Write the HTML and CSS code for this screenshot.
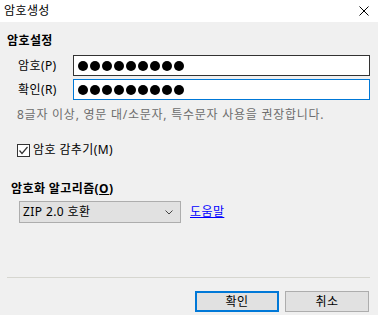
FILE: index.html
```html
<!DOCTYPE html>
<html>
    <head lang="ko">
        <meta charset="UTF-8">
        <title>암호생성</title>
        <link rel="stylesheet" href="styles.css">
    </head>
    <body>
        <div id="dialog">
            <div class="titlebar">
                <span class="title">암호생성</span>
                <svg class="close" width="10" height="10" viewBox="0 0 10 10">
                    <path d="M0.5 0.5L9.5 9.5M9.5 0.5L0.5 9.5" stroke="#000" stroke-width="1" fill="none"/>
                </svg>
            </div>
            <div class="body">
                <div class="group-title">암호설정</div>
                <div class="field">
                    <span class="label">암호(P)</span>
                    <div class="pw">
                        <i></i><i></i><i></i><i></i><i></i><i></i><i></i><i></i><i></i>
                    </div>
                </div>
                <div class="field second">
                    <span class="label">확인(R)</span>
                    <div class="pw focus">
                        <i></i><i></i><i></i><i></i><i></i><i></i><i></i><i></i><i></i>
                    </div>
                </div>
                <p class="hint">8글자 이상, 영문 대/소문자, 특수문자 사용을 권장합니다.</p>
                <div class="check">
                    <span class="box">
                        <svg width="11" height="11" viewBox="0 0 11 11">
                            <path d="M1.5 5.5L4 8.5L9.5 2" stroke="#333" stroke-width="1.2" fill="none"/>
                        </svg>
                    </span>
                    <span>암호 감추기(M)</span>
                </div>
                <div class="group-title algo">암호화 알고리즘(<u>O</u>)</div>
                <div class="algo-row">
                    <div class="select">
                        <span>ZIP 2.0 호환</span>
                        <svg width="8" height="5" viewBox="0 0 8 5">
                            <path d="M0.5 0.5L4 4L7.5 0.5" stroke="#444" stroke-width="1" fill="none"/>
                        </svg>
                    </div>
                    <a class="help" href="#">도움말</a>
                </div>
                <div class="sep"></div>
                <div class="buttons">
                    <span class="btn default">확인</span>
                    <span class="btn">취소</span>
                </div>
            </div>
        </div>
    </body>
</html>
```

FILE: styles.css
```css
*{
    margin:0;
    padding:0;
    box-sizing:border-box;
}
body{
    font-family:"Noto Sans","Noto Sans CJK KR",sans-serif;
    font-size:12px;
    line-height:16px;
    letter-spacing:0.4px;
    color:#000;
    background:#f0f0f0;
}
#dialog{
    width:378px;
    height:315px;
    background:#f0f0f0;
}
.titlebar{
    height:22px;
    background:#fff;
    display:flex;
    align-items:center;
    justify-content:space-between;
    padding:0 9px 0 4px;
}
.title{
    font-size:12px;
}
.close{
    display:block;
}
.body{
    padding:0 8px 0 7px;
}
.group-title{
    margin-top:11px;
    font-weight:bold;
}
.field{
    display:flex;
    align-items:center;
    margin-top:6px;
    padding-left:11px;
}
.field.second{
    margin-top:3px;
}
.label{
    width:55px;
}
.pw{
    flex:1;
    height:21px;
    background:#fff;
    border:1px solid #333;
    display:flex;
    align-items:center;
    gap:2px;
    padding-left:4px;
}
.pw.focus{
    border-color:#0078d7;
}
.pw i{
    width:10px;
    height:10px;
    border-radius:50%;
    background:#000;
}
.hint{
    margin-top:7px;
    padding-left:10px;
    color:#6d6d6d;
    letter-spacing:0.75px;
}
.check{
    margin-top:19px;
    padding-left:10px;
    display:flex;
    align-items:center;
    gap:3px;
}
.box{
    width:13px;
    height:13px;
    border:1px solid #333;
    background:#fff;
    display:flex;
    align-items:center;
    justify-content:center;
}
.box svg{
    display:block;
}
.group-title.algo{
    margin-top:23px;
    padding-left:4px;
}
.algo-row{
    margin-top:4px;
    padding-left:12px;
    display:flex;
    align-items:center;
    gap:9px;
}
.select{
    width:162px;
    height:22px;
    background:#e1e1e1;
    border:1px solid #adadad;
    display:flex;
    align-items:center;
    justify-content:space-between;
    padding:0 7px 0 3px;
}
.select svg{
    display:block;
}
.help{
    color:#0000ff;
    text-decoration:underline;
}
.sep{
    margin-top:54px;
    height:1px;
    background:#d6d6d0;
}
.buttons{
    margin-top:13px;
    display:flex;
    justify-content:flex-end;
    gap:6px;
    padding-right:1px;
}
.btn{
    width:84px;
    height:21px;
    background:#e1e1e1;
    border:1px solid #adadad;
    display:flex;
    align-items:center;
    justify-content:center;
}
.btn.default{
    border:2px solid #0078d7;
}
```
